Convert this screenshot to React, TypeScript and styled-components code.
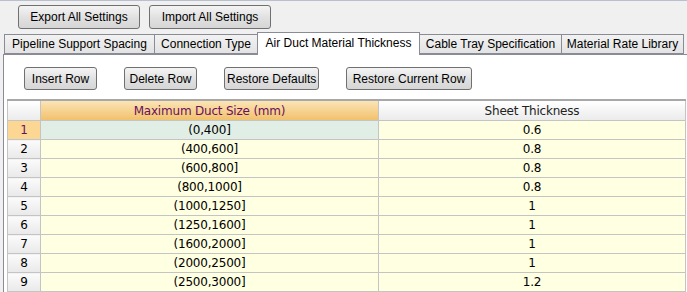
import React from "react";
import styled, { createGlobalStyle } from "styled-components";

const Global = createGlobalStyle`
  html, body { margin: 0; padding: 0; background: #f0f0f0; }
  body { font-family: "Liberation Sans", Arial, sans-serif; }
`;

const Window = styled.div`
  width: 687px;
  height: 292px;
  overflow: hidden;
  background: #f0f0f0;
  border-top: 1px solid #b8c0d0;
  box-sizing: border-box;
`;

const Toolbar = styled.div`
  display: flex;
  gap: 9px;
  padding: 4px 0 0 18px;
`;

const Button = styled.button<{ $w: number; $h?: number }>`
  width: ${(p) => p.$w}px;
  height: ${(p) => p.$h ?? 24}px;
  padding: 0 2px;
  font-family: "Liberation Sans", Arial, sans-serif;
  font-size: 12px;
  color: #000;
  background: linear-gradient(#f4f4f4, #e0e0e0 55%, #d6d6d6);
  border: 1px solid #707070;
  border-radius: 3px;
  box-sizing: border-box;
  white-space: nowrap;
`;

const TabBar = styled.div`
  display: flex;
  align-items: flex-end;
  height: 22px;
  margin-top: 3px;
  padding-left: 5px;
  position: relative;
  z-index: 1;
`;

const Tab = styled.div<{ $active?: boolean; $w: number }>`
  width: ${(p) => p.$w}px;
  height: ${(p) => (p.$active ? 23 : 20)}px;
  margin-left: -1px;
  margin-bottom: ${(p) => (p.$active ? -1 : 0)}px;
  display: flex;
  align-items: center;
  justify-content: center;
  box-sizing: border-box;
  font-size: 12px;
  color: #000;
  white-space: nowrap;
  border: 1px solid #898c95;
  border-bottom: ${(p) => (p.$active ? "none" : "1px solid #898c95")};
  background: ${(p) => (p.$active ? "#ffffff" : "linear-gradient(#f2f2f2, #e3e3e3)")};
  padding-bottom: ${(p) => (p.$active ? 3 : 0)}px;
`;

const Panel = styled.div`
  margin-left: 3px;
  background: #fff;
  border: 1px solid #898c95;
  border-right: none;
  height: 240px;
  box-sizing: border-box;
  padding: 12px 0 0 3px;
`;

const Actions = styled.div`
  display: flex;
  gap: 27px;
  padding-left: 17px;
`;

const Grid = styled.table`
  margin-top: 9px;
  border-collapse: collapse;
  width: 678px;
  table-layout: fixed;
  font-family: "DejaVu Sans", Tahoma, sans-serif;
  font-size: 12px;
  letter-spacing: -0.2px;
  border-top: 2px solid #a8a8a8;
  border-left: 1px solid #a8a8a8;
`;

const HeadCell = styled.th<{ $sel?: boolean }>`
  height: 19px;
  padding: 0;
  font-weight: normal;
  border: 1px solid #c4c4c4;
  color: ${(p) => (p.$sel ? "#6a1060" : "#222")};
  background: ${(p) =>
    p.$sel ? "linear-gradient(#fbe4b6, #f1c16c)" : "linear-gradient(#ffffff, #ebebeb)"};
`;

const RowHead = styled.td<{ $sel?: boolean }>`
  height: 18px;
  padding: 0;
  text-align: center;
  border: 1px solid #c4c4c4;
  color: ${(p) => (p.$sel ? "#6a1060" : "#000")};
  background: ${(p) => (p.$sel ? "#fcd693" : "linear-gradient(#fbfbfb, #e9e9e9)")};
`;

const Cell = styled.td<{ $sel?: boolean }>`
  height: 18px;
  padding: 0;
  text-align: center;
  border: 1px solid #c4c4c4;
  color: #000;
  background: ${(p) => (p.$sel ? "#e0eee5" : "#ffffe1")};
`;

const rows = [
  ["(0,400]", "0.6"],
  ["(400,600]", "0.8"],
  ["(600,800]", "0.8"],
  ["(800,1000]", "0.8"],
  ["(1000,1250]", "1"],
  ["(1250,1600]", "1"],
  ["(1600,2000]", "1"],
  ["(2000,2500]", "1"],
  ["(2500,3000]", "1.2"],
];

const tabs = [
  { label: "Pipeline Support Spacing", w: 151 },
  { label: "Connection Type", w: 104 },
  { label: "Air Duct Material Thickness", w: 163, active: true },
  { label: "Cable Tray Specification", w: 143 },
  { label: "Material Rate Library", w: 123 },
];

const actions = [
  { label: "Insert Row", w: 73 },
  { label: "Delete Row", w: 73 },
  { label: "Restore Defaults", w: 95 },
  { label: "Restore Current Row", w: 126 },
];

export default function App() {
  return (
    <Window>
      <Global />
      <Toolbar>
        <Button $w={122}>Export All Settings</Button>
        <Button $w={122}>Import All Settings</Button>
      </Toolbar>
      <TabBar>
        {tabs.map((t) => (
          <Tab key={t.label} $w={t.w} $active={t.active}>
            {t.label}
          </Tab>
        ))}
      </TabBar>
      <Panel>
        <Actions>
          {actions.map((a) => (
            <Button key={a.label} $w={a.w} $h={23}>
              {a.label}
            </Button>
          ))}
        </Actions>
        <Grid>
          <colgroup>
            <col style={{ width: 33 }} />
            <col style={{ width: 338 }} />
            <col style={{ width: 307 }} />
          </colgroup>
          <thead>
            <tr>
              <HeadCell />
              <HeadCell $sel>Maximum Duct Size (mm)</HeadCell>
              <HeadCell>Sheet Thickness</HeadCell>
            </tr>
          </thead>
          <tbody>
            {rows.map((r, i) => (
              <tr key={i}>
                <RowHead $sel={i === 0}>{i + 1}</RowHead>
                <Cell $sel={i === 0}>{r[0]}</Cell>
                <Cell>{r[1]}</Cell>
              </tr>
            ))}
          </tbody>
        </Grid>
      </Panel>
    </Window>
  );
}
